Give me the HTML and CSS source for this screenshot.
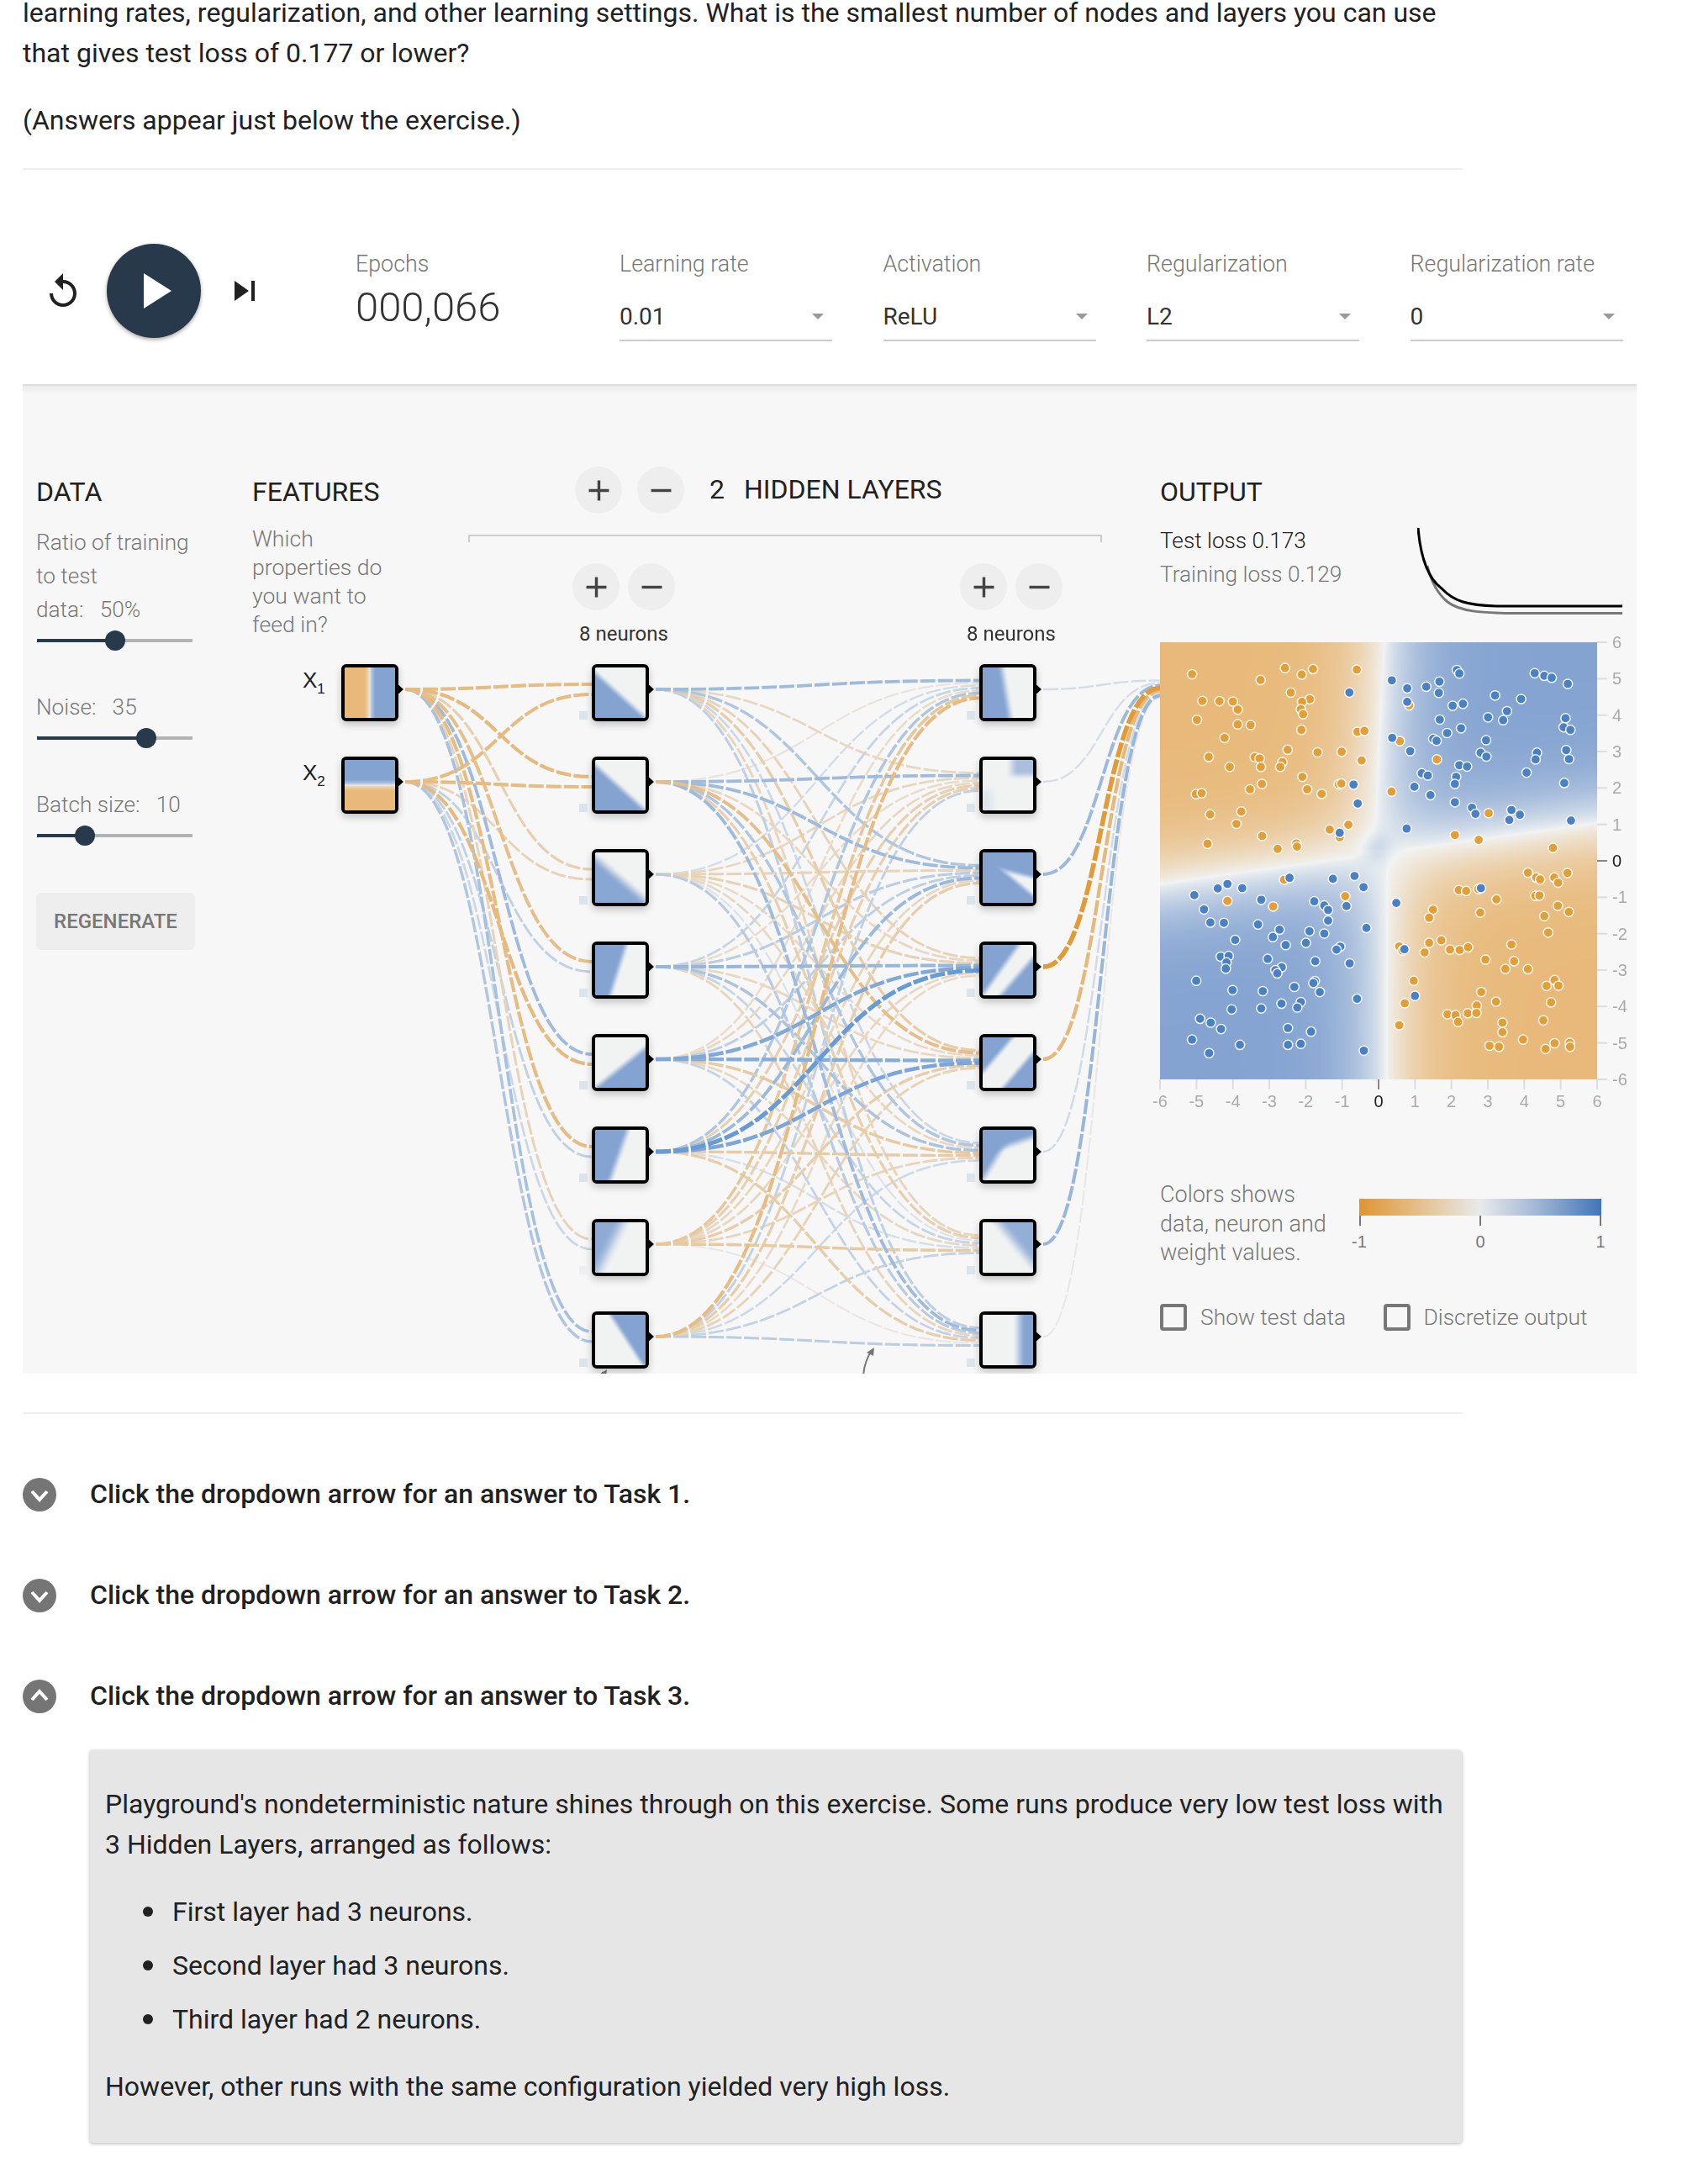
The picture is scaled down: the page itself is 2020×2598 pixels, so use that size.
FILE: index.html
```html
<!DOCTYPE html>
<html lang="en">
<head>
<meta charset="utf-8">
<title>Playground exercise</title>
<link rel="stylesheet" href="styles.css">
</head>
<body>
<div class="article">
  <p class="first">learning rates, regularization, and other learning settings. What is the smallest number of nodes and layers you can use that gives test loss of 0.177 or lower?</p>
  <p>(Answers appear just below the exercise.)</p>
  <hr class="rule rule-top">
</div>

<section class="playground">
  <div class="toolbar">
    <svg class="ic-reset" viewBox="0 0 24 24"><path d="M12 5V1L7 6l5 5V7c3.31 0 6 2.69 6 6s-2.69 6-6 6-6-2.69-6-6H4c0 4.42 3.58 8 8 8s8-3.58 8-8-3.58-8-8-8z"/></svg>
    <div class="play"><svg viewBox="0 0 24 24"><path d="M8 5v14l11-7z"/></svg></div>
    <svg class="ic-step" viewBox="0 0 24 24"><path d="M6 18l8.500-6L6 6v12zM16 6v12h2V6h-2z"/></svg>
    <div class="epochs"><div class="tb-label">Epochs</div><div class="epoch-num">000,066</div></div>
    <div class="drop"><div class="tb-label">Learning rate</div><div class="drop-val">0.01</div></div>
    <div class="drop"><div class="tb-label">Activation</div><div class="drop-val">ReLU</div></div>
    <div class="drop"><div class="tb-label">Regularization</div><div class="drop-val">L2</div></div>
    <div class="drop"><div class="tb-label">Regularization rate</div><div class="drop-val">0</div></div>
  </div>

  <div class="panel">
    <div class="net" id="net"></div>

    <div class="col-data">
      <h4>DATA</h4>
      <div class="ctl-label first-label">Ratio of training<br>to test<br>data:&nbsp;&nbsp; 50%</div>
      <div class="slider"><div class="slider-fill" style="width:93px"></div><div class="slider-thumb" style="left:81px"></div></div>
      <div class="ctl-label">Noise:&nbsp;&nbsp; 35</div>
      <div class="slider"><div class="slider-fill" style="width:130px"></div><div class="slider-thumb" style="left:118px"></div></div>
      <div class="ctl-label">Batch size:&nbsp;&nbsp; 10</div>
      <div class="slider"><div class="slider-fill" style="width:57px"></div><div class="slider-thumb" style="left:45px"></div></div>
      <div class="regen">REGENERATE</div>
    </div>

    <div class="col-features">
      <h4>FEATURES</h4>
      <div class="feat-text">Which properties do you want to feed in?</div>
    </div>

    <div class="col-hidden">
      <div class="layers-head">
        <div class="round"><svg viewBox="0 0 24 24"><path d="M19 13h-6v6h-2v-6H5v-2h6V5h2v6h6v2z"/></svg></div>
        <div class="round"><svg viewBox="0 0 24 24"><path d="M19 13H5v-2h14v2z"/></svg></div>
        <span class="layers-num">2</span><span class="layers-name">HIDDEN LAYERS</span>
      </div>
      <div class="bracket"></div>
      <div class="layer-ctls">
        <div class="layer-ctl">
          <div class="round-pair">
            <div class="round"><svg viewBox="0 0 24 24"><path d="M19 13h-6v6h-2v-6H5v-2h6V5h2v6h6v2z"/></svg></div>
            <div class="round"><svg viewBox="0 0 24 24"><path d="M19 13H5v-2h14v2z"/></svg></div>
          </div>
          <div class="neurons">8 neurons</div>
        </div>
        <div class="layer-ctl">
          <div class="round-pair">
            <div class="round"><svg viewBox="0 0 24 24"><path d="M19 13h-6v6h-2v-6H5v-2h6V5h2v6h6v2z"/></svg></div>
            <div class="round"><svg viewBox="0 0 24 24"><path d="M19 13H5v-2h14v2z"/></svg></div>
          </div>
          <div class="neurons">8 neurons</div>
        </div>
      </div>
    </div>

    <div class="col-output">
      <h4>OUTPUT</h4>
      <div class="loss-row">
        <div class="losses">
          <div class="loss-test">Test loss 0.173</div>
          <div class="loss-train">Training loss 0.129</div>
        </div>
        <svg class="loss-chart" viewBox="0 0 244 104">
          <path class="loss-line-train" d="M12 45C16 62 24 78 36 88C50 99 75 101.500 120 101.500L244 101.500"/>
          <path class="loss-line-test" d="M1 0C4 36 13 60 29 72C42 86 58 93 100 93L244 93"/>
        </svg>
      </div>
      <div class="plot" id="plot">
        <canvas id="heat" width="520" height="520"></canvas>
        <svg id="plot-svg" class="plot-svg" width="520" height="520"></svg>
      </div>
      <div class="legend">
        <div class="legend-text">Colors shows data, neuron and weight values.</div>
        <div class="scale">
          <div class="scale-bar"></div>
          <svg class="scale-axis" width="288" height="46">
            <path class="scale-tick" d="M1 0v12M144 0v12M287 0v12"/>
            <text class="scale-label" x="0" y="38">-1</text>
            <text class="scale-label" x="144" y="38">0</text>
            <text class="scale-label" x="287" y="38">1</text>
          </svg>
        </div>
      </div>
      <div class="checks">
        <div class="check check-one"><span class="box"></span><span>Show test data</span></div>
        <div class="check"><span class="box"></span><span>Discretize output</span></div>
      </div>
    </div>
  </div>
</section>

<div class="article">
  <hr class="rule rule-bottom">
  <div class="task"><span class="chev"><svg viewBox="0 0 40 40"><path d="M11 16l9 10 9-10"/></svg></span><span class="task-text">Click the dropdown arrow for an answer to Task 1.</span></div>
  <div class="task"><span class="chev"><svg viewBox="0 0 40 40"><path d="M11 16l9 10 9-10"/></svg></span><span class="task-text">Click the dropdown arrow for an answer to Task 2.</span></div>
  <div class="task"><span class="chev"><svg viewBox="0 0 40 40"><path d="M11 24l9-10 9 10"/></svg></span><span class="task-text">Click the dropdown arrow for an answer to Task 3.</span></div>
  <div class="answer">
    <p>Playground's nondeterministic nature shines through on this exercise. Some runs produce very low test loss with 3 Hidden Layers, arranged as follows:</p>
    <ul>
      <li>First layer had 3 neurons.</li>
      <li>Second layer had 3 neurons.</li>
      <li>Third layer had 2 neurons.</li>
    </ul>
    <p class="last">However, other runs with the same configuration yielded very high loss.</p>
  </div>
</div>
<script src="script.js"></script>
</body>
</html>
```
FILE: styles.css
```css
* { box-sizing: border-box; }
html, body { margin: 0; padding: 0; background: #fff; }
body { padding-left: 27px; height: 2598px; overflow: hidden; font-family: Roboto, "Liberation Sans", sans-serif; color: #212121; font-size: 32px; line-height: 48px; }

.article { width: 1713px; }
p { margin: 0 0 32px; }
.first { margin-top: -9px; }
.rule { border: 0; height: 2px; background: #eee; margin: 0; }
.rule-top { margin-top: 33px; }
.rule-bottom { margin-top: 46px; margin-bottom: 76px; }

/* toolbar */
.playground { width: 1920px; }
.toolbar { position: relative; display: flex; height: 257px; background: #fff; border-bottom: 2px solid #dcdcdc; }
.ic-reset { width: 48px; height: 48px; margin: 121px 0 0 24px; fill: #212121; flex: none; }
.ic-step { width: 48px; height: 48px; margin: 120px 0 0 28px; fill: #212121; flex: none; }
.play { width: 112px; height: 112px; margin: 88px 0 0 28px; border-radius: 50%; background: #27394b; box-shadow: 0 2px 5px rgba(0,0,0,.35); display: flex; align-items: center; justify-content: center; flex: none; }
.play svg { width: 72px; height: 72px; fill: #fff; }
.epochs { width: 314px; margin-left: 108px; padding-top: 97px; flex: none; }
.tb-label { font-size: 26.800px; font-weight: 300; line-height: 30px; color: #777; }
.epoch-num { font-size: 49px; font-weight: 300; line-height: 56px; margin-top: 9px; color: #333; }
.drop { width: 253px; margin-right: 60.500px; padding-top: 97px; flex: none; }
.drop-val { position: relative; height: 77px; padding-top: 32px; font-size: 28px; line-height: 32px; color: #333; border-bottom: 2px solid #ccc; }
.drop-val::after { content: ""; position: absolute; right: 10px; top: 44px; border-left: 7px solid transparent; border-right: 7px solid transparent; border-top: 7px solid #999; }

/* panel */
.panel { position: relative; height: 1175px; background: #f7f7f7; overflow: hidden; display: grid; grid-template-columns: 257px 257px 823px 550px; padding: 103px 0 0 16px; align-items: start; }
.panel::before { content: ""; position: absolute; left: 0; right: 0; top: 0; height: 10px; background: linear-gradient(to bottom, rgba(0,0,0,.05), rgba(0,0,0,0)); }
h4 { margin: 0; padding-top: 4px; font-size: 32px; font-weight: 400; line-height: 38px; color: #212121; }
.net { position: absolute; left: 0; top: 0; width: 1920px; height: 1175px; }
.net-svg { position: absolute; left: 0; top: 0; }
.col-data, .col-features, .col-hidden, .col-output { position: relative; }

.ctl-label { font-size: 26.200px; font-weight: 300; line-height: 40px; color: #777; width: 195px; }
.first-label { margin-top: 21px; }
.slider { position: relative; width: 185px; height: 24px; margin: 5px 0 47px; margin-left: 1px; }
.slider::before { content: ""; position: absolute; left: 0; right: 0; top: 10px; height: 4px; background: #b3b3b3; }
.slider-fill { position: absolute; left: 0; top: 10px; height: 4px; background: #27394b; }
.slider-thumb { position: absolute; top: 0; width: 24px; height: 24px; border-radius: 50%; background: #27394b; }
.regen { width: 189px; height: 68px; margin: 56px 0 0 0; border-radius: 6px; background: #eee; font-size: 24px; font-weight: 500; line-height: 68px; text-align: center; color: #777; }

.feat-text { width: 175px; margin-top: 20px; font-size: 26.600px; font-weight: 300; line-height: 34px; color: #777; }

.layers-head { display: flex; align-items: center; margin: -7px 0 0 127px; height: 56px; }
.round { width: 56px; height: 56px; border-radius: 50%; background: #eee; display: flex; align-items: center; justify-content: center; flex: none; }
.round svg { width: 41px; height: 41px; fill: #444; }
.layers-head .round + .round { margin-left: 18px; }
.layers-num { margin-left: 30px; padding-bottom: 2px; font-size: 32px; line-height: 38px; }
.layers-name { margin-left: 23px; padding-bottom: 2px; font-size: 32px; line-height: 38px; }
.bracket { width: 754px; height: 9px; margin-top: 25px; border: 2px solid #ccc; border-bottom: 0; }
.layer-ctls { display: flex; margin: 25px 0 0 124px; gap: 339px; }
.layer-ctl { width: 122px; }
.round-pair { display: flex; gap: 10px; }
.neurons { width: 122px; margin-top: 14px; text-align: center; font-size: 24px; line-height: 28px; color: #333; white-space: nowrap; }

.loss-row { display: flex; height: 160px; align-items: flex-start; }
.losses { width: 306px; margin-top: 19px; font-size: 26.200px; font-weight: 300; line-height: 40px; }
.loss-test { color: #212121; }
.loss-train { color: #777; }
.loss-chart { width: 244px; height: 104px; margin-top: 24px; fill: none; }
.loss-line-test { stroke: #000; stroke-width: 3; fill: none; }
.loss-line-train { stroke: #777; stroke-width: 3; fill: none; }

.plot { position: relative; width: 520px; height: 520px; }
.plot canvas { display: block; width: 520px; height: 520px; }
.plot-svg { position: absolute; left: 0; top: 0; overflow: visible; }
.dot-o { fill: #e29e37; stroke: rgba(255,255,255,.9); stroke-width: 1.500; }
.dot-b { fill: #4a80c4; stroke: rgba(255,255,255,.9); stroke-width: 1.500; }
.tick { stroke: #ddd; stroke-width: 2; }
.tick-zero { stroke: #888; stroke-width: 2; }
.tick-label { font-family: "Liberation Sans", Arial, sans-serif; font-size: 20px; fill: #aaa; }
.tick-label-zero { font-family: "Liberation Sans", Arial, sans-serif; font-size: 20px; fill: #212121; }
.tick-x { text-anchor: middle; }

.legend { display: flex; margin-top: 120px; }
.legend-text { width: 237px; font-size: 27px; font-weight: 300; line-height: 34.500px; color: #777; padding-right: 20px; }
.scale { width: 288px; margin-top: 22px; }
.scale-bar { height: 20px; background: linear-gradient(to right, #df9533 0%, #e5c9a0 30%, #e8eaeb 50%, #a5bad7 72%, #4275b8 100%); }
.scale-axis { display: block; overflow: visible; }
.scale-tick { stroke: #777; stroke-width: 2; fill: none; }
.scale-label { font-family: "Liberation Sans", Arial, sans-serif; font-size: 20px; fill: #777; text-anchor: middle; }

.checks { display: flex; margin-top: 43px; font-size: 26.400px; font-weight: 300; line-height: 32px; color: #777; }
.check { display: flex; align-items: center; gap: 16px; }
.check-one { width: 265.500px; }
.box { width: 32px; height: 32px; border: 4px solid #777; border-radius: 4px; flex: none; }

/* network nodes */
.node { position: absolute; width: 68px; height: 68px; border: 4px solid #000; border-radius: 6px; background: #fff; box-shadow: 0 4px 10px rgba(0,0,0,.22); }
.node canvas { display: block; width: 60px; height: 60px; border-radius: 2px; }
.node::after { content: ""; position: absolute; left: 60px; top: 17px; border-left: 10px solid #000; border-top: 9px solid transparent; border-bottom: 9px solid transparent; }
.bias { position: absolute; width: 10px; height: 10px; background: #dbe3eb; }
.bias-pale { background: #eceeef; }
.feature-label { position: absolute; font-family: "Liberation Sans", Arial, sans-serif; font-size: 26px; line-height: 30px; color: #212121; }
.feature-label sub { font-size: 17px; line-height: 0; vertical-align: -7px; }
.link { fill: none; stroke-dasharray: 18 3; }
.note-arrow { fill: none; stroke: #777; stroke-width: 2; }
.note-head { fill: #777; }

/* tasks */
.task { display: flex; align-items: center; gap: 40px; height: 40px; margin-bottom: 80px; font-weight: 500; color: #212121; line-height: 40px; }
.task-text { position: relative; top: -1px; }
.chev { width: 40px; height: 40px; border-radius: 50%; background: #757575; flex: none; }
.chev svg { display: block; width: 40px; height: 40px; fill: none; stroke: #fff; stroke-width: 4; }
.answer { margin: -36px 1px 0 80px; padding: 40px 18px 11px; background: #e6e6e6; border-radius: 4px; box-shadow: 0 1px 4px rgba(0,0,0,.3); }
.answer ul { margin: 0 0 32px; padding-left: 80px; list-style: none; }
.answer li { position: relative; margin-bottom: 16px; }
.answer li::before { content: ""; position: absolute; left: -35px; top: 18px; width: 12px; height: 12px; border-radius: 50%; background: #212121; }
.answer li:last-child { margin-bottom: 0; }
```
FILE: script.js
```javascript
(function () {
  var NS = "http://www.w3.org/2000/svg";
  var ORG = [232, 185, 122], BLU = [132, 163, 209], NEU = [241, 243, 243];

  function clamp(x) { return Math.max(0, Math.min(1, x)); }
  function sm(x) { x = clamp(x); return x * x * (3 - 2 * x); }
  function L(x0, y0, x1, y1, s, u, v) {
    var dx = x1 - x0, dy = y1 - y0, n = Math.sqrt(dx * dx + dy * dy);
    return sm((dx * (v - y0) - dy * (u - x0)) / n / s + 0.5);
  }
  function colour(val) {
    var t = Math.abs(val), c = val > 0 ? BLU : ORG;
    return [0, 1, 2].map(function (i) { return Math.round(NEU[i] + (c[i] - NEU[i]) * t); });
  }
  function paint(cv, w, h, fn) {
    var ctx = cv.getContext("2d"), img = ctx.createImageData(w, h);
    for (var y = 0; y < h; y++) for (var x = 0; x < w; x++) {
      var c = colour(fn((x + 0.5) / w, (y + 0.5) / h)), i = (y * w + x) * 4;
      img.data[i] = c[0]; img.data[i + 1] = c[1]; img.data[i + 2] = c[2]; img.data[i + 3] = 255;
    }
    ctx.putImageData(img, 0, 0);
  }
  function ramp(t) {
    t = Math.max(-1, Math.min(1, t));
    return (t < 0 ? -1 : 1) * Math.sqrt(Math.abs(t));
  }

  var inputs = [
    function (u) { return ramp((u - 0.5) * 9); },
    function (u, v) { return ramp((0.5 - v) * 9); }
  ];
  var layer1 = [
    function (u, v) { return L(0, .1, 1, 1, .16, u, v); },
    function (u, v) { return L(0, .1, 1, 1, .16, u, v); },
    function (u, v) { return .95 * L(0, .1, 1, .95, .26, u, v); },
    function (u, v) { return L(.62, 0, .3, 1, .16, u, v); },
    function (u, v) { return L(0, 1, 1, .2, .16, u, v); },
    function (u, v) { return L(.65, 0, .3, 1, .18, u, v); },
    function (u, v) { return .9 * L(.55, 0, .05, 1, .36, u, v); },
    function (u, v) { return L(.95, 1, .3, 0, .14, u, v); }
  ];
  var layer2 = [
    function (u, v) { return L(.38, 0, .55, 1, .2, u, v); },
    function (u, v) { return .65 * sm((u - .45) / .25) * sm((.4 - v) / .18) + .18 * sm((.35 - u) / .3) * sm((v - .45) / .3); },
    function (u, v) { return 1 - L(.4, .35, 1, .5, .14, u, v) * L(1, .85, .4, .35, .14, u, v); },
    function (u, v) { return Math.max(L(.72, 0, 0, 1, .16, u, v), L(.35, 1, 1, .25, .16, u, v)); },
    function (u, v) { return Math.max(L(.6, 0, 0, .7, .14, u, v), L(.4, 1, 1, .3, .14, u, v)); },
    function (u, v) { return 1 - L(0, 1, .4, .35, .2, u, v) * L(.4, .35, 1, .15, .2, u, v); },
    function (u, v) { return .85 * L(1, .85, .3, 0, .3, u, v); },
    function (u) { return sm((u - .58) / .28); }
  ];

  var TOP = [331, 441, 551, 661, 771, 881, 991, 1101];
  var net = document.getElementById("net");

  function addNode(x, y, fn) {
    var d = document.createElement("div");
    d.className = "node";
    d.style.left = x + "px";
    d.style.top = y + "px";
    var c = document.createElement("canvas");
    c.width = 60; c.height = 60;
    d.appendChild(c);
    paint(c, 60, 60, fn);
    return d;
  }

  /* link weights: positive = blue, negative = orange */
  var w01 = [
    [-.58, -.6, -.35, -.55, .5, -.58, -.3, .45],
    [-.58, -.58, -.3, .28, -.6, .28, .22, .4]
  ];
  var w12 = [
    [.5, -.25, .4, -.3, -.38, .22, -.28, .3],
    [-.1, .5, .5, -.25, -.55, .4, -.35, .5],
    [.16, -.26, -.3, -.32, -.22, -.25, .1, .34],
    [.25, -.2, .32, .55, -.25, .42, .25, -.28],
    [-.2, -.25, .3, .68, .64, -.42, -.25, .26],
    [.4, -.34, .52, .82, .7, -.4, .14, -.38],
    [-.45, -.34, -.26, -.25, -.38, -.28, -.42, -.06],
    [-.58, .28, -.38, -.22, -.3, .2, .26, .32]
  ];
  var w23 = [.16, .14, .52, -.95, -.62, .18, .55, -.05];

  function mix(a, b, t) {
    return "rgb(" + [0, 1, 2].map(function (i) { return Math.round(a[i] + (b[i] - a[i]) * t); }).join(",") + ")";
  }
  var NL = [233, 234, 235], OL = [227, 150, 45], BL = [72, 134, 205];

  var svg = document.createElementNS(NS, "svg");
  svg.setAttribute("class", "net-svg");
  svg.setAttribute("width", 1920);
  svg.setAttribute("height", 1175);
  svg.setAttribute("viewBox", "27 459 1920 1175");
  net.appendChild(svg);

  var paths = [];
  function link(x0, y0, x1, y1, wt) {
    paths.push({ x0: x0, y0: y0, x1: x1, y1: y1, wt: wt });
  }
  var rows = [790, 900, 1010, 1120, 1230, 1340, 1450, 1560];
  w01.forEach(function (row, s) {
    row.forEach(function (wt, t) {
      link(482, [820, 930][s], 704, rows[t] + 30 + (s - .5) * 12, wt);
    });
  });
  w12.forEach(function (row, s) {
    row.forEach(function (wt, t) {
      link(780, rows[s] + 30, 1165, rows[t] + 30 + (s - 3.5) * 3, wt);
    });
  });
  w23.forEach(function (wt, s) {
    link(1241, rows[s] + 30, 1380, 820 + (s - 3.5) * 3, wt);
  });
  paths.sort(function (a, b) { return Math.abs(a.wt) - Math.abs(b.wt); });
  paths.forEach(function (p) {
    var e = document.createElementNS(NS, "path"), xm = (p.x0 + p.x1) / 2;
    e.setAttribute("class", "link");
    e.setAttribute("d", "M" + p.x0 + " " + p.y0 + "C" + xm + " " + p.y0 + " " + xm + " " + p.y1 + " " + p.x1 + " " + p.y1);
    var m = Math.abs(p.wt);
    e.style.stroke = mix(NL, p.wt > 0 ? BL : OL, Math.min(1, Math.pow(m, 1.1)));
    e.style.strokeWidth = (1.8 + m * 4).toFixed(1);
    svg.appendChild(e);
  });

  /* small note arrows, clipped by the panel edge */
  [["M1027 1640C1027 1624 1032 1614 1037 1606", "M1040 1603l-9 6 8 4z"],
   ["M712 1640C714 1636 716 1634 718 1632", "M722 1629l-9 6 8 4z"]].forEach(function (a) {
    var l = document.createElementNS(NS, "path");
    l.setAttribute("class", "note-arrow");
    l.setAttribute("d", a[0]);
    svg.appendChild(l);
    var h = document.createElementNS(NS, "path");
    h.setAttribute("class", "note-head");
    h.setAttribute("d", a[1]);
    svg.appendChild(h);
  });

  inputs.forEach(function (fn, i) {
    net.appendChild(addNode(379, TOP[i], fn));
    var lab = document.createElement("div");
    lab.className = "feature-label";
    lab.style.left = "333px";
    lab.style.top = (TOP[i] + 4) + "px";
    lab.innerHTML = "X<sub>" + (i + 1) + "</sub>";
    net.appendChild(lab);
  });
  [[677, layer1], [1138, layer2]].forEach(function (col) {
    col[1].forEach(function (fn, i) {
      net.appendChild(addNode(col[0], TOP[i], fn));
      var b = document.createElement("div");
      b.className = "bias" + (col[0] === 677 && i === 6 ? " bias-pale" : "");
      b.style.left = (col[0] - 15) + "px";
      b.style.top = (TOP[i] + 56) + "px";
      net.appendChild(b);
    });
  });

  /* output heat map */
  function tanh(x) { return (Math.exp(x) - Math.exp(-x)) / (Math.exp(x) + Math.exp(-x)); }
  function soft(x) { var t = tanh(x); return (t < 0 ? -1 : 1) * Math.pow(Math.abs(t), .8); }
  paint(document.getElementById("heat"), 520, 520, function (u, v) {
    var x = u * 12 - 6, y = 6 - v * 12;
    var x0 = y > .3 ? -.1 + .047 * (y - .5) : .22;
    var X = x - x0, Y = y - (.2 + .14 * x);
    var val = soft(X * .72) * soft(Y * .72);
    val += .3 * Math.exp(-((x + .05) * (x + .05) + (y - .35) * (y - .35)) / .16);
    return Math.max(-1, Math.min(1, val));
  });

  /* dots, in reference-crop pixels */
  var O = "178,162 391,180 467,143 519,163 554,146 690,148 485,219 210,245 263,246 305,247 320,272 193,304 320,318 360,320 279,360 544,240 520,248 516,271 523,286 518,335 692,341 714,338 230,419 295,450 373,420 388,424 392,450 459,435 452,450 475,397 568,405 643,403 705,430 521,481 395,503 358,520 536,520 581,534 634,504 642,502 190,535 208,532 234,598 331,589 316,627 396,665 226,689 444,705 502,688 504,698 606,645 637,669 664,630 853,259 824,370 939,427 798,527 1100,594 995,662 1069,677 1300,702 464,801 288,867 430,884 654,852 1222,779 1248,794 1260,800 1304,794 1345,780 1316,810 1007,833 1030,836 1068,830 1124,862 1245,851 1258,850 927,894 915,919 1074,903 1315,882 1273,914 1349,901 1285,965 915,997 953,989 822,1008 832,1021 901,1027 980,1018 1010,1019 1036,1011 1171,1002 1090,1049 1179,1054 1152,1078 1222,1079 867,1115 1305,1113 1280,1131 1317,1130 1077,1150 839,1185 1123,1180 1063,1192 1294,1182 972,1219 997,1222 1035,1216 1062,1215 1005,1243 822,1253 1143,1245 1270,1238 1143,1275 1207,1298 1103,1317 1132,1320 1277,1327 1305,1309 1352,1308 1353,1320";
  var B = "667,219 799,181 847,206 906,201 947,185 945,220 1001,149 1009,160 1243,159 1273,167 1296,173 1346,192 1120,228 1201,239 847,248 988,260 1020,254 1157,277 948,303 1098,296 1145,305 1339,299 1333,327 1354,335 1014,330 971,345 800,360 928,363 938,369 1092,367 856,401 1075,406 1093,418 1341,398 1350,426 1250,406 1246,427 1009,445 1033,449 892,470 911,477 999,481 995,503 1218,468 1335,500 869,512 919,538 680,505 693,564 995,560 1048,577 1059,596 1171,584 1197,599 1164,615 1356,617 845,642 637,655 481,795 616,798 683,789 711,824 288,814 258,828 334,827 185,849 393,863 558,868 589,881 601,895 658,883 215,893 235,934 277,935 383,940 450,956 429,979 601,928 543,961 589,968 720,951 312,988 469,1004 532,997 639,1009 627,1018 267,1040 292,1038 285,1058 283,1077 413,1047 561,1054 668,1061 457,1073 437,1082 443,1092 191,1115 560,1116 555,1122 304,1144 398,1147 496,1134 575,1150 691,1171 516,1181 456,1186 505,1198 393,1201 301,1204 203,1233 236,1245 268,1265 476,1262 548,1273 178,1298 327,1314 231,1340 476,1314 516,1311 712,1332 1076,827 813,873 838,1017 871,1162";
  var ps = document.getElementById("plot-svg");
  function el(name, cls, attrs, txt) {
    var e = document.createElementNS(NS, name);
    e.setAttribute("class", cls);
    for (var k in attrs) e.setAttribute(k, attrs[k]);
    if (txt !== undefined) e.textContent = txt;
    ps.appendChild(e);
  }
  for (var i = -6; i <= 6; i++) {
    var p = (i + 6) * 520 / 12, z = i === 0;
    el("line", z ? "tick-zero" : "tick", { x1: p, x2: p, y1: 520, y2: 532 });
    el("line", z ? "tick-zero" : "tick", { x1: 520, x2: 532, y1: 520 - p, y2: 520 - p });
    el("text", (z ? "tick-label-zero" : "tick-label") + " tick-x", { x: p, y: 553 }, String(i));
    el("text", z ? "tick-label-zero" : "tick-label", { x: 538, y: 520 - p + 7 }, String(i));
  }
  function dots(list, cls) {
    list.split(" ").forEach(function (s) {
      var a = s.split(",");
      el("circle", cls, { cx: (a[0] / 2.613 + 1350 - 1380).toFixed(1), cy: (a[1] / 2.613 + 740 - 764).toFixed(1), r: 5.6 });
    });
  }
  dots(O, "dot-o");
  dots(B, "dot-b");
})();
```
